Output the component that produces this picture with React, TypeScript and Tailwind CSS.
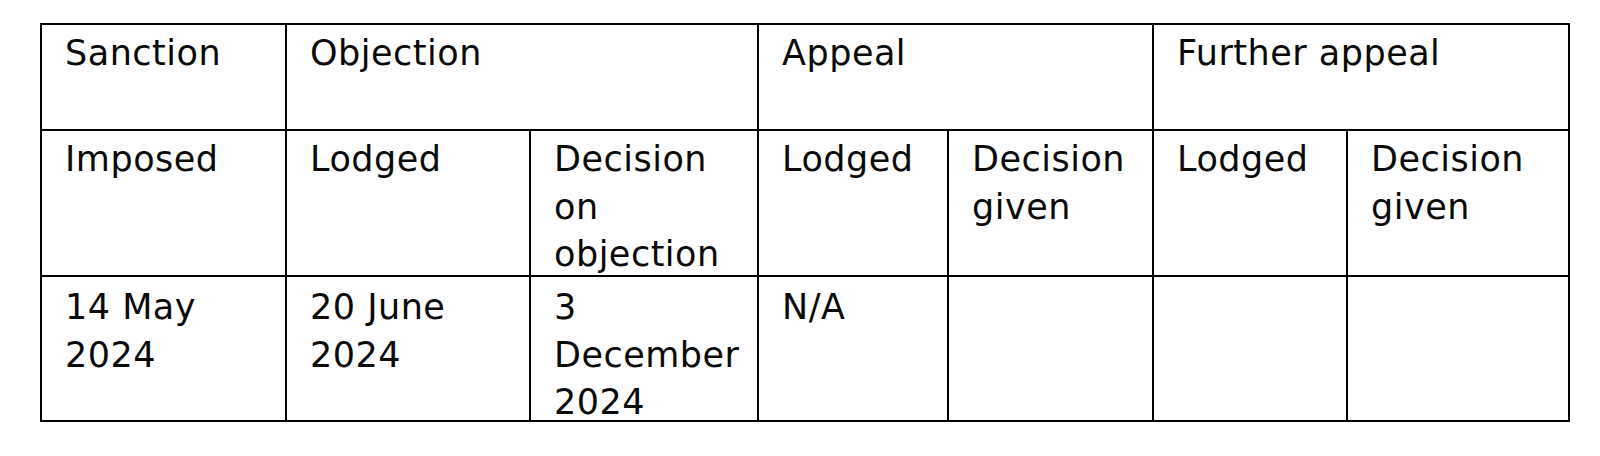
import React from "react";

const cell = "border-2 border-black align-top p-0 font-normal text-left";

function C({
  children,
  span,
  pt = "pt-[5px]",
}: {
  children?: React.ReactNode;
  span?: number;
  pt?: string;
}) {
  return (
    <td className={cell} colSpan={span}>
      <div className={`pl-[23px] pr-[4px] whitespace-nowrap -mb-[12px] ${pt}`}>{children}</div>
    </td>
  );
}

export default function App() {
  return (
    <div
      className="w-[1600px] h-[456px] bg-white pt-[23px] pl-[40px] text-[#0a0a0a] text-[35px] leading-[47.7px] tracking-[0.5px]"
      style={{ fontFamily: '"DejaVu Sans", Verdana, sans-serif' }}
    >
      <table className="border-collapse table-fixed w-[1530px]">
        <colgroup>
          <col className="w-[245px]" />
          <col className="w-[244px]" />
          <col className="w-[228px]" />
          <col className="w-[190px]" />
          <col className="w-[205px]" />
          <col className="w-[194px]" />
          <col className="w-[222px]" />
        </colgroup>
        <tbody>
          <tr className="h-[106px]">
            <C>Sanction</C>
            <C span={2}>Objection</C>
            <C span={2}>Appeal</C>
            <C span={2}>Further appeal</C>
          </tr>
          <tr className="h-[146px]">
            <C>Imposed</C>
            <C>Lodged</C>
            <C>
              Decision
              <br />
              on
              <br />
              objection
            </C>
            <C>Lodged</C>
            <C>
              Decision
              <br />
              given
            </C>
            <C>Lodged</C>
            <C>
              Decision
              <br />
              given
            </C>
          </tr>
          <tr className="h-[145px]">
            <C pt="pt-[7px]">
              14 May
              <br />
              2024
            </C>
            <C pt="pt-[7px]">
              20 June
              <br />
              2024
            </C>
            <C pt="pt-[7px]">
              3
              <br />
              December
              <br />
              2024
            </C>
            <C pt="pt-[7px]">N/A</C>
            <C pt="pt-[7px]"></C>
            <C pt="pt-[7px]"></C>
            <C pt="pt-[7px]"></C>
          </tr>
        </tbody>
      </table>
    </div>
  );
}
